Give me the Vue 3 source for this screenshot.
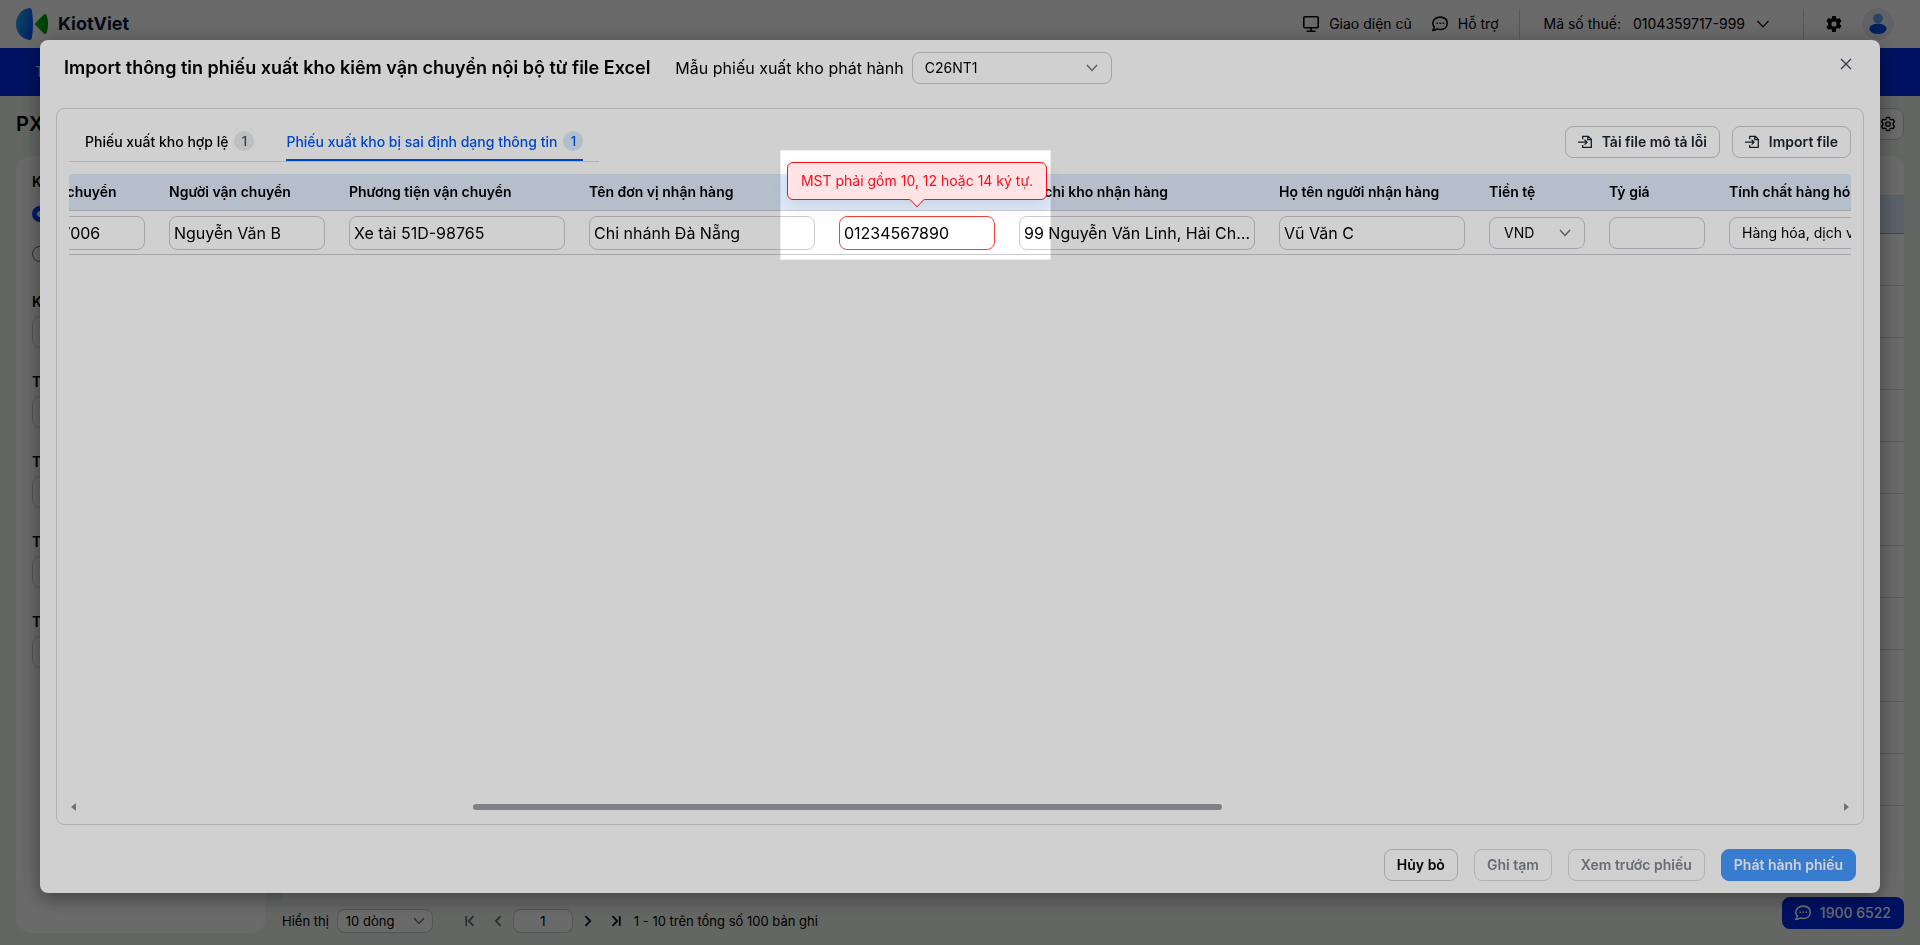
<script setup>
import { onMounted, ref } from 'vue'

const filters = ['Kỳ phát hành', 'Trạng thái phiếu', 'Trạng thái CQT', 'Trạng thái gửi', 'Tên người nhận']

const columns = [
  { title: 'Hợp đồng vận chuyển', width: 200, value: 'HDVC/2026/006' },
  { title: 'Người vận chuyển', width: 180, value: 'Nguyễn Văn B' },
  { title: 'Phương tiện vận chuyển', width: 240, value: 'Xe tải 51D-98765' },
  { title: 'Tên đơn vị nhận hàng', width: 250, value: 'Chi nhánh Đà Nẵng' },
  { title: 'Mã số thuế', width: 180, value: '01234567890', error: true },
  { title: 'Địa chỉ kho nhận hàng', width: 260, value: '99 Nguyễn Văn Linh, Hải Châu, Đà Nẵng' },
  { title: 'Họ tên người nhận hàng', width: 210, value: 'Vũ Văn C' },
  { title: 'Tiền tệ', width: 120, value: 'VND', type: 'select', short: true },
  { title: 'Tỷ giá', width: 120, value: '', short: true },
  { title: 'Tính chất hàng hóa', width: 250, value: 'Hàng hóa, dịch vụ', type: 'select' }
]

const tabs = [
  { label: 'Phiếu xuất kho hợp lệ', count: 1 },
  { label: 'Phiếu xuất kho bị sai định dạng thông tin', count: 1 }
]
const activeTab = ref(1)

const scroller = ref(null)
onMounted(() => {
  scroller.value.scrollLeft = 112
})
</script>

<template>
  <div class="app">
    <header class="topbar">
      <a class="logo" href="#">
        <svg width="34" height="32" viewBox="0 0 34 32">
          <defs>
            <linearGradient id="logo-blue" x1="0" x2="1" y1="0.3" y2="0.7">
              <stop offset="0" stop-color="#22a7f0" />
              <stop offset="1" stop-color="#0050f0" />
            </linearGradient>
            <linearGradient id="logo-green" x1="0" x2="1">
              <stop offset="0" stop-color="#00c010" />
              <stop offset="1" stop-color="#009000" />
            </linearGradient>
          </defs>
          <path d="M13.500 0C15 0 15.600 1 16 3c1.300 8 1.300 18 0 26-.4 2-1 3-2.500 3C5 31 0 24 0 16S5 1 13.500 0z" fill="url(#logo-blue)" />
          <path d="M19.600 14.700l8-8c1-1 2.500-.9 3 .5 2 5.500 2 12 0 17.500-.5 1.400-2 1.600-3 .6l-8-8c-.8-.8-.8-1.800 0-2.600z" fill="url(#logo-green)" />
        </svg>
        <span>KiotViet</span>
      </a>
      <nav class="topnav">
        <a class="toplink" href="#">
          <svg width="16" height="16" viewBox="0 0 16 16" fill="none" stroke="currentColor" stroke-width="1.600">
            <rect x="0.800" y="0.800" width="14.400" height="11" rx="1" />
            <path d="M8 12v3M3.500 15.200h9" />
          </svg>
          Giao diện cũ
        </a>
        <a class="toplink" href="#">
          <svg width="16" height="16" viewBox="1 1 14.500 14.500" fill="none" stroke="currentColor" stroke-width="1.400" stroke-linejoin="round">
            <path d="M8.500 2C4.500 2 1.700 4.400 1.700 7.500c0 1.400.6 2.700 1.500 3.600-.2 1.200-.8 2.200-1.600 3 1.600 0 3-.5 4-1.300.9.300 1.900.4 2.900.4 4 0 6.300-2.500 6.300-5.700S12.500 2 8.500 2z" />
            <path d="M5 7.600h1.400M7.800 7.600h1.400M10.600 7.600H12" />
          </svg>
          Hỗ trợ
        </a>
        <button class="tax" type="button">
          <span>Mã số thuế:</span>
          <span>0104359717-999</span>
          <svg width="12" height="8" viewBox="0 0 12 8" fill="none" stroke="currentColor" stroke-width="1.200"><path d="M.5 1L6 6.800 11.500 1" /></svg>
        </button>
        <button class="plain gear" type="button" aria-label="Thiết lập">
          <svg width="16" height="16" viewBox="0 0 16 16">
            <path fill="currentColor" fill-rule="evenodd" d="M6.200 0h3.600l.4 2.200 1.300.7 2.200-.8 1.800 3.100-1.700 1.500v1.500l1.700 1.500-1.800 3.100-2.200-.8-1.300.8L9.800 16H6.200l-.4-2.200-1.300-.8-2.200.8-1.800-3.100 1.700-1.500V6.700L.5 5.200l1.800-3.100 2.200.8 1.300-.7zM8 5.400a2.600 2.600 0 100 5.200 2.600 2.600 0 000-5.200z" />
          </svg>
        </button>
        <button class="plain avatar" type="button" aria-label="Tài khoản">
          <svg width="32" height="32" viewBox="0 0 32 32">
            <circle cx="16" cy="16" r="16" fill="#e6ebf2" />
            <circle cx="16" cy="10.500" r="4.800" fill="#5ba4f5" />
            <ellipse cx="16" cy="20.800" rx="8.600" ry="5.200" fill="#0050e6" />
          </svg>
        </button>
      </nav>
    </header>
    <nav class="mainnav"><a href="#">Tổng quan</a></nav>

    <div class="page">
      <div class="page-head">
        <h1>PXK kiêm vận chuyển nội bộ</h1>
        <button class="settings" type="button" aria-label="Tùy chỉnh">
          <svg width="16" height="16" viewBox="0 0 16 16" fill="none" stroke="currentColor" stroke-width="1.300" stroke-linejoin="round">
            <path d="M6.500 1.300h3l.5 1.900 1.100.6 1.900-.5 1.500 2.500-1.400 1.400v1.600l1.400 1.400-1.500 2.500-1.900-.5-1.100.6-.5 1.900h-3L6 12.800l-1.100-.6-1.900.5-1.500-2.500 1.400-1.400V7.200L1.500 5.800 3 3.300l1.900.5L6 3.200z" />
            <circle cx="8" cy="8" r="2.200" />
          </svg>
        </button>
      </div>
      <div class="columns">
        <aside class="sidebar">
          <div class="radios">
            <span class="flabel">Kỳ lập phiếu</span>
            <label class="radio"><input type="radio" name="period" checked /> Tháng này</label>
            <label class="radio"><input type="radio" name="period" /> Tùy chọn</label>
          </div>
          <div v-for="(f, i) in filters" :key="f" class="filter">
            <label class="flabel" :for="'filter-' + i">{{ f }}</label>
            <input :id="'filter-' + i" type="text" />
          </div>
        </aside>
        <main class="listing">
          <div class="grid">
            <div class="grid-tools"></div>
            <div class="grid-head"></div>
            <div v-for="n in 11" :key="n" class="grid-row"></div>
          </div>
          <div class="pager">
            <label for="page-size">Hiển thị</label>
            <div class="select size">
              <select id="page-size"><option>10 dòng</option></select>
              <svg width="12" height="8" viewBox="0 0 12 8"><path d="M1 1l5 5.500L11 1" /></svg>
            </div>
            <div class="pages">
              <button class="plain" type="button" disabled aria-label="Trang đầu">
                <svg width="10" height="12" viewBox="0 0 10 12"><path d="M1.200 1v10M8.500 1.200L3.800 6l4.700 4.800" /></svg>
              </button>
              <button class="plain" type="button" disabled aria-label="Trang trước">
                <svg width="10" height="12" viewBox="0 0 10 12"><path d="M7.500 1.200L2.800 6l4.700 4.800" /></svg>
              </button>
              <input type="text" value="1" aria-label="Trang" />
              <button class="plain" type="button" aria-label="Trang sau">
                <svg width="10" height="12" viewBox="0 0 10 12"><path d="M2.500 1.200L7.200 6l-4.700 4.800" /></svg>
              </button>
              <button class="plain" type="button" aria-label="Trang cuối">
                <svg width="10" height="12" viewBox="0 0 10 12"><path d="M8.800 1v10M1.500 1.200L6.200 6l-4.700 4.800" /></svg>
              </button>
            </div>
            <span>1 - 10 trên tổng số 100 bản ghi</span>
          </div>
        </main>
      </div>
    </div>

    <a class="hotline" href="#">
      <svg width="16" height="16" viewBox="1 1 14.500 14.500" fill="none" stroke="currentColor" stroke-width="1.400" stroke-linejoin="round">
        <path d="M8.500 2C4.500 2 1.700 4.400 1.700 7.500c0 1.400.6 2.700 1.500 3.600-.2 1.200-.8 2.200-1.600 3 1.600 0 3-.5 4-1.300.9.300 1.900.4 2.900.4 4 0 6.300-2.500 6.300-5.700S12.500 2 8.500 2z" />
        <path d="M5 7.600h1.400M7.800 7.600h1.400M10.600 7.600H12" />
      </svg>
      1900 6522
    </a>

    <div class="mask">
      <section class="modal" role="dialog" aria-modal="true" aria-labelledby="modal-title">
        <div class="modal-head">
          <h2 id="modal-title">Import thông tin phiếu xuất kho kiêm vận chuyển nội bộ từ file Excel</h2>
          <label for="template">Mẫu phiếu xuất kho phát hành</label>
          <div class="select template">
            <select id="template"><option>C26NT1</option></select>
            <svg width="12" height="8" viewBox="0 0 12 8"><path d="M1 1l5 5.500L11 1" /></svg>
          </div>
          <button class="plain close" type="button" aria-label="Đóng">
            <svg width="12" height="12" viewBox="0 0 12 12" fill="none" stroke="currentColor" stroke-width="1.400"><path d="M1 1l10 10M11 1L1 11" /></svg>
          </button>
        </div>

        <div class="panel">
          <div class="toolbar">
            <div class="tabs" role="tablist">
              <button
                v-for="(tab, i) in tabs"
                :key="tab.label"
                class="tab"
                :class="{ active: activeTab === i }"
                type="button"
                role="tab"
                :aria-selected="activeTab === i"
                @click="activeTab = i"
              >
                {{ tab.label }}<span class="count">{{ tab.count }}</span>
              </button>
            </div>
            <div class="actions">
              <button v-for="text in ['Tải file mô tả lỗi', 'Import file']" :key="text" class="btn file" type="button">
                <svg width="14" height="14" viewBox="0 0 14 14" fill="none" stroke="currentColor" stroke-width="1.300">
                  <path d="M4.700 4.300V1.300h5.600l3 2.900v8.100H4.700V10M9.800 1.300v3.300h3.400M0 7.200h9M6.600 4.800L9 7.200 6.600 9.600" />
                </svg>
                {{ text }}
              </button>
            </div>
          </div>

          <div ref="scroller" class="scroller">
            <table>
              <colgroup>
                <col v-for="c in columns" :key="c.title" :style="{ width: c.width + 'px' }" />
              </colgroup>
              <thead>
                <tr>
                  <th v-for="c in columns" :key="c.title" scope="col">{{ c.title }}</th>
                </tr>
              </thead>
              <tbody>
                <tr>
                  <td v-for="c in columns" :key="c.title">
                    <div v-if="c.type === 'select'" class="select" :class="{ short: c.short }">
                      <select :aria-label="c.title"><option>{{ c.value }}</option></select>
                      <svg width="12" height="8" viewBox="0 0 12 8"><path d="M1 1l5 5.500L11 1" /></svg>
                    </div>
                    <input v-else type="text" :class="{ error: c.error, short: c.short }" :value="c.value" :aria-label="c.title" />
                  </td>
                </tr>
              </tbody>
            </table>
          </div>

          <div class="scrollbar">
            <svg width="5" height="8" viewBox="0 0 5 8"><path d="M5 0v8L0 4z" /></svg>
            <div class="track"><div class="thumb"></div></div>
            <svg width="5" height="8" viewBox="0 0 5 8"><path d="M0 0v8l5-4z" /></svg>
          </div>
        </div>

        <div class="modal-foot">
          <button class="btn" type="button">Hủy bỏ</button>
          <button class="btn" type="button" disabled>Ghi tạm</button>
          <button class="btn" type="button" disabled>Xem trước phiếu</button>
          <button class="btn primary" type="button">Phát hành phiếu</button>
        </div>
      </section>
    </div>

    <div class="spotlight">
      <div class="tooltip" role="tooltip">MST phải gồm 10, 12 hoặc 14 ký tự.</div>
    </div>
  </div>
</template>

<style>
body {
  margin: 0;
  overflow: hidden;
}
</style>

<style scoped>
.app {
  --blue: #0028e6;
  --line: #c9cbd1;
  min-height: 100vh;
  display: flex;
  flex-direction: column;
  background: #f0f5f1;
  color: #000;
  font: 14px/20px Inter, sans-serif;
}
.app *,
.app *::before,
.app *::after {
  box-sizing: border-box;
}
button,
input,
select {
  font: inherit;
  color: inherit;
}
a {
  color: inherit;
  text-decoration: none;
}
svg {
  display: block;
  flex: none;
}
.plain {
  display: flex;
  padding: 0;
  border: 0;
  background: none;
}

.topbar {
  height: 48px;
  padding: 0 26px 0 16px;
  display: flex;
  align-items: center;
  justify-content: space-between;
  background: #fff;
}
.logo {
  display: flex;
  align-items: center;
  gap: 8px;
  font-size: 18px;
  font-weight: 700;
  color: #0a1838;
}
.topnav,
.toplink,
.tax {
  display: flex;
  align-items: center;
}
.toplink {
  gap: 10px;
  margin-right: 20px;
}
.tax {
  gap: 12px;
  height: 30px;
  padding: 0 34px 0 24px;
  margin-right: 22px;
  border: solid #d5d7db;
  border-width: 0 1px;
  background: none;
}
.gear {
  margin-right: 20px;
}
.mainnav {
  height: 48px;
  padding: 0 35px;
  display: flex;
  align-items: center;
  background: var(--blue);
  color: #9ae0ff;
  font-weight: 500;
}

.page {
  flex: 1;
  padding: 12px 16px;
  display: flex;
  flex-direction: column;
}
.page-head {
  display: flex;
  align-items: center;
  justify-content: space-between;
  margin-bottom: 16px;
}
h1 {
  margin: 0;
  font-size: 20px;
  line-height: 28px;
  font-weight: 600;
}
.settings {
  width: 32px;
  height: 32px;
  padding: 0 7px;
  border: 1px solid var(--line);
  border-radius: 8px;
  background: #fff;
}
.columns {
  flex: 1;
  display: flex;
  gap: 16px;
}
.sidebar {
  width: 250px;
  padding: 16px;
  border-radius: 16px;
  background: #fff;
}
.flabel {
  display: block;
  font-weight: 600;
}
.radios {
  margin-bottom: 18px;
}
.radios .flabel {
  margin-bottom: 2px;
}
.radio {
  height: 40px;
  display: flex;
  align-items: center;
  gap: 8px;
}
.radio input {
  appearance: none;
  width: 16px;
  height: 16px;
  margin: 0;
  border: 1px solid #6b707c;
  border-radius: 50%;
}
.radio input:checked {
  border: 5px solid #0040ff;
}
.filter {
  margin-bottom: 24px;
}
.filter input {
  width: 100%;
  height: 32px;
  margin-top: 4px;
  display: block;
  border: 1px solid var(--line);
  border-radius: 8px;
}
.listing {
  flex: 1;
  display: flex;
  flex-direction: column;
}
.grid {
  flex: 1;
  border-radius: 12px 12px 0 0;
  background: #fff;
}
.grid-tools {
  height: 40px;
  border-bottom: 1px solid #dcdee2;
}
.grid-head {
  height: 38px;
  background: #d8e8fc;
  border-bottom: 1px solid #7eaaf0;
}
.grid-row {
  height: 52px;
  border-bottom: 1px solid #d8d8d8;
}
.pager {
  display: flex;
  align-items: center;
  gap: 8px;
  margin-top: 8px;
  font-size: 13px;
}
.pages {
  display: flex;
  align-items: center;
  gap: 10px;
  margin: 0 5px 0 24px;
}
.pages button:first-child {
  margin-right: 8px;
}
.pages button:last-child {
  margin-left: 8px;
}
.pages svg {
  fill: none;
  stroke: #0b1526;
  stroke-width: 1.800;
}
.pages :disabled svg {
  stroke: #6b707c;
}
.pages input {
  width: 60px;
  height: 24px;
  padding: 0;
  border: 1px solid var(--line);
  border-radius: 8px;
  background: #fff;
  text-align: center;
}
.hotline {
  position: fixed;
  right: 16px;
  bottom: 16px;
  height: 32px;
  padding: 0 13px;
  display: flex;
  align-items: center;
  gap: 9px;
  border-radius: 8px;
  background: var(--blue);
  color: #fff;
  font-weight: 500;
}

.select {
  display: grid;
  align-items: center;
}
.select > * {
  grid-area: 1 / 1;
}
.select select {
  appearance: none;
  width: 100%;
  height: 32px;
  padding: 0 12px;
  border: 1px solid var(--line);
  border-radius: 8px;
  background: transparent;
}
.select svg {
  justify-self: end;
  margin-right: 14px;
  fill: none;
  stroke: #6b7482;
  stroke-width: 1.400;
  pointer-events: none;
}
.select.short select {
  padding: 0 14px;
}
.size {
  width: 96px;
}
.size select {
  height: 24px;
  padding: 0 8px;
  background: #fff;
}
.size svg {
  margin-right: 8px;
}
.template {
  width: 200px;
}

.mask {
  position: fixed;
  inset: 0;
  padding: 40px 40px 52px;
  display: flex;
  background: rgba(0, 0, 0, 0.49);
}
.modal {
  flex: 1;
  min-width: 0;
  padding: 12px 16px;
  display: flex;
  flex-direction: column;
  border-radius: 8px;
  background: #fff;
  box-shadow:
    0 6px 16px rgba(0, 0, 0, 0.16),
    0 3px 24px rgba(0, 0, 0, 0.3);
}
.modal-head {
  display: flex;
  align-items: center;
  gap: 8px;
  padding-left: 8px;
  margin-bottom: 24px;
  white-space: nowrap;
}
h2 {
  margin: 0 17px 0 0;
  font-size: 18px;
  line-height: 28px;
  font-weight: 600;
}
.modal-head label {
  font-size: 16px;
}
.close {
  align-self: flex-start;
  margin: 6px 12px 0 auto;
  color: #3f4b5e;
}
.panel {
  flex: 1;
  min-height: 0;
  padding: 12px;
  display: flex;
  flex-direction: column;
  border: 1px solid #dadbdf;
  border-radius: 8px;
}
.toolbar {
  display: flex;
  align-items: center;
  justify-content: space-between;
  height: 41px;
  margin-bottom: 12px;
}
.tabs {
  display: flex;
  align-self: stretch;
  gap: 32px;
  padding: 0 16px;
  border-bottom: 1px solid #dadbdf;
}
.tab {
  display: flex;
  align-items: center;
  gap: 6px;
  padding: 4px 0 0;
  border: 0;
  border-bottom: 2px solid transparent;
  background: none;
  font-weight: 500;
}
.tab.active {
  border-color: #0057f5;
  color: #0057f5;
}
.count {
  width: 20px;
  height: 20px;
  margin-bottom: 2px;
  border-radius: 10px;
  background: #e9eaed;
  color: #3f4b5e;
  font-size: 13px;
  text-align: center;
}
.active .count {
  background: #dbe9fb;
  color: #0057f5;
}
.actions {
  display: flex;
  gap: 12px;
}
.btn {
  display: flex;
  align-items: center;
  justify-content: center;
  gap: 10px;
  height: 32px;
  padding: 0 12px;
  border: 1px solid var(--line);
  border-radius: 8px;
  background: #fff;
  font-weight: 600;
}
.btn.file {
  color: #1b2430;
}
.btn:disabled {
  border-color: #dadbdf;
  color: #80868f;
}
.btn.primary {
  border-color: #4599ff;
  background: #4599ff;
  color: #fff;
}

.scroller {
  flex: 1;
  min-height: 0;
  overflow: auto hidden;
  scrollbar-width: none;
  border-radius: 4px 4px 0 0;
}
table {
  width: 2010px;
  table-layout: fixed;
  border-collapse: separate;
  border-spacing: 0;
}
th {
  height: 37px;
  padding: 0 12px;
  border-bottom: 1px solid var(--line);
  background: #deebfb;
  font-weight: 600;
  text-align: left;
}
td {
  height: 44px;
  padding: 0 12px;
  border-bottom: 1px solid var(--line);
}
td input {
  display: block;
  width: 100%;
  height: 34px;
  padding: 0 4px;
  border: 1px solid var(--line);
  border-radius: 8px;
  background: none;
  font-size: 16px;
  text-overflow: ellipsis;
}
td input.short {
  height: 32px;
}
td input.error {
  border-color: #f5403a;
}
.scrollbar {
  display: flex;
  align-items: center;
  gap: 10px;
  padding: 0 2px 1px;
}
.scrollbar svg {
  fill: #8b8c90;
}
.track {
  flex: 1;
  display: flex;
}
.track::before {
  content: '';
  flex: 387;
}
.track::after {
  content: '';
  flex: 612;
}
.thumb {
  flex: 749;
  height: 6px;
  border-radius: 3px;
  background: #9d9ea3;
}
.modal-foot {
  display: flex;
  justify-content: flex-end;
  gap: 16px;
  padding: 24px 8px 0;
}

/* guided-tour highlight over the invalid cell */
.spotlight {
  position: fixed;
  top: 150px;
  left: 780px;
  width: 271px;
  height: 110px;
  padding: 11px 3px 0 6px;
  border: 1px solid rgba(0, 0, 0, 0.07);
  box-shadow: 0 0 0 9999px rgba(0, 0, 0, 0.184);
  pointer-events: none;
}
.tooltip {
  position: relative;
  height: 38px;
  border: 1px solid #f5101c;
  border-radius: 6px;
  background: #ffe4e5;
  box-shadow: 0 6px 16px rgba(0, 0, 0, 0.1);
  color: #f5101c;
  line-height: 36px;
  text-align: center;
  white-space: nowrap;
}
.tooltip::after {
  content: '';
  position: absolute;
  left: 50%;
  bottom: -6px;
  width: 12px;
  height: 12px;
  margin-left: -6px;
  border: solid #f5101c;
  border-width: 0 1px 1px 0;
  background: #ffe4e5;
  clip-path: polygon(100% 0, 100% 100%, 0 100%);
  transform: rotate(45deg);
}
</style>
